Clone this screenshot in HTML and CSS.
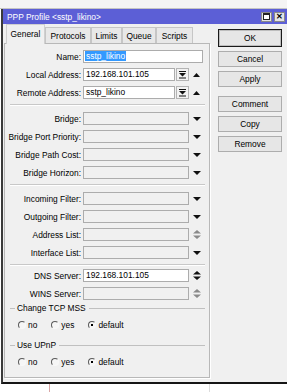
FILE: index.html
```html
<!DOCTYPE html>
<html lang="en">
<head>
  <meta charset="UTF-8">
  <title>PPP Profile</title>
  <link rel="stylesheet" href="styles.css">
</head>
<body>
  <div class="top-strip"></div>
  <div class="window">
    <div class="titlebar">
      <span class="title">PPP Profile &lt;sstp_likino&gt;</span>
      <div class="title-btns">
        <span class="tbtn"><span class="max-box"></span></span>
        <span class="tbtn close">&#x2715;</span>
      </div>
    </div>
    <div class="win-body">
      <div class="tabs-area">
        <div class="tabs">
          <div class="tab active t-general">General</div>
          <div class="tab t-protocols">Protocols</div>
          <div class="tab t-limits">Limits</div>
          <div class="tab t-queue">Queue</div>
          <div class="tab t-scripts">Scripts</div>
        </div>
        <div class="panel">
          <div class="row">
            <label>Name:</label>
            <div class="field white w-full"><span class="sel">sstp_likino</span></div>
          </div>
          <div class="row">
            <label>Local Address:</label>
            <div class="field white w-short">192.168.101.105</div>
            <div class="fbtn"><svg width="7" height="8" viewBox="0 0 7 8"><path d="M0 0h7v1H0zM0 2h7L3.5 5.5zM0 6.5h7v1H0z"/></svg></div>
            <div class="slot"><svg width="7" height="4" viewBox="0 0 7 4"><path d="M0 4h7L3.5 0z"/></svg></div>
          </div>
          <div class="row">
            <label>Remote Address:</label>
            <div class="field white w-short">sstp_likino</div>
            <div class="fbtn"><svg width="7" height="8" viewBox="0 0 7 8"><path d="M0 0h7v1H0zM0 2h7L3.5 5.5zM0 6.5h7v1H0z"/></svg></div>
            <div class="slot"><svg width="7" height="4" viewBox="0 0 7 4"><path d="M0 4h7L3.5 0z"/></svg></div>
          </div>
          <div class="sep"></div>
          <div class="row">
            <label>Bridge:</label>
            <div class="field w-mid"></div>
            <div class="slot"><svg width="8" height="4" viewBox="0 0 8 4"><path d="M0 0h8L4 4z"/></svg></div>
          </div>
          <div class="row">
            <label>Bridge Port Priority:</label>
            <div class="field w-mid"></div>
            <div class="slot"><svg width="8" height="4" viewBox="0 0 8 4"><path d="M0 0h8L4 4z"/></svg></div>
          </div>
          <div class="row">
            <label>Bridge Path Cost:</label>
            <div class="field w-mid"></div>
            <div class="slot"><svg width="8" height="4" viewBox="0 0 8 4"><path d="M0 0h8L4 4z"/></svg></div>
          </div>
          <div class="row">
            <label>Bridge Horizon:</label>
            <div class="field w-mid"></div>
            <div class="slot"><svg width="8" height="4" viewBox="0 0 8 4"><path d="M0 0h8L4 4z"/></svg></div>
          </div>
          <div class="sep"></div>
          <div class="row">
            <label>Incoming Filter:</label>
            <div class="field w-mid"></div>
            <div class="slot"><svg width="8" height="4" viewBox="0 0 8 4"><path d="M0 0h8L4 4z"/></svg></div>
          </div>
          <div class="row">
            <label>Outgoing Filter:</label>
            <div class="field w-mid"></div>
            <div class="slot"><svg width="8" height="4" viewBox="0 0 8 4"><path d="M0 0h8L4 4z"/></svg></div>
          </div>
          <div class="row">
            <label>Address List:</label>
            <div class="field w-mid"></div>
            <div class="slot dim"><svg width="8" height="9" viewBox="0 0 8 9"><path d="M0 3.5h8L4 0zM0 5.5h8L4 9z"/></svg></div>
          </div>
          <div class="row">
            <label>Interface List:</label>
            <div class="field w-mid"></div>
            <div class="slot"><svg width="8" height="4" viewBox="0 0 8 4"><path d="M0 0h8L4 4z"/></svg></div>
          </div>
          <div class="sep tight"></div>
          <div class="row">
            <label>DNS Server:</label>
            <div class="field white w-mid">192.168.101.105</div>
            <div class="slot"><svg width="8" height="9" viewBox="0 0 8 9"><path d="M0 3.5h8L4 0zM0 5.5h8L4 9z"/></svg></div>
          </div>
          <div class="row last">
            <label>WINS Server:</label>
            <div class="field w-mid"></div>
            <div class="slot dim"><svg width="8" height="9" viewBox="0 0 8 9"><path d="M0 3.5h8L4 0zM0 5.5h8L4 9z"/></svg></div>
          </div>

          <div class="group-title"><span>Change TCP MSS</span></div>
          <div class="radios">
            <span class="opt"><span class="radio"></span>no</span>
            <span class="opt"><span class="radio"></span>yes</span>
            <span class="opt"><span class="radio on"></span>default</span>
          </div>

          <div class="group-title"><span>Use UPnP</span></div>
          <div class="radios">
            <span class="opt"><span class="radio"></span>no</span>
            <span class="opt"><span class="radio"></span>yes</span>
            <span class="opt"><span class="radio on"></span>default</span>
          </div>
        </div>
      </div>

      <div class="side-buttons">
        <button class="default">OK</button>
        <button>Cancel</button>
        <button class="gap-after">Apply</button>
        <button>Comment</button>
        <button>Copy</button>
        <button>Remove</button>
      </div>
    </div>
  </div>
  <div class="under"></div>
</body>
</html>
```

FILE: styles.css
```css
body {
  margin: 0;
  width: 287px;
  height: 392px;
  overflow: hidden;
  background: #fff;
  font-family: "Liberation Sans", Arial, sans-serif;
  font-size: 8.4px;
  color: #000;
}
.top-strip {
  height: 8px;
  background: #f4f4f4;
  border-bottom: 1px solid #c4c4c4;
}
.window {
  margin-left: 1px;
  border-left: 2px solid #3a3a3a;
  border-bottom: 2px solid #151515;
  background: #f0f0f0;
}
.titlebar {
  height: 15px;
  background: #5c5fd6;
  display: flex;
  align-items: center;
  justify-content: space-between;
  padding: 0 2px 0 4px;
}
.title {
  color: #fff;
  font-size: 8.4px;
}
.title-btns {
  display: flex;
  gap: 2px;
}
.tbtn {
  width: 9px;
  height: 8px;
  background: #e4e4e4;
  border: 1px solid #8a8a8a;
  display: flex;
  align-items: center;
  justify-content: center;
  font-size: 8px;
  font-weight: bold;
  line-height: 1;
}
.max-box {
  width: 5px;
  height: 4px;
  border: 1px solid #222;
  border-top-width: 2px;
  background: #fff;
}
.win-body {
  display: flex;
  height: 358px;
}
.tabs-area {
  margin-left: 1px;
  width: 206px;
}
.tabs {
  display: flex;
  align-items: flex-end;
  height: 19px;
  padding-left: 2px;
}
.tab {
  display: flex;
  align-items: center;
  justify-content: center;
  background: #e8e8e8;
  border: 1px solid #c6c6c6;
  border-bottom: none;
  box-sizing: border-box;
  height: 16px;
}
.tab.active {
  height: 20px;
  margin-bottom: -1px;
  background: #f0f0f0;
  border-color: #d0d0d0;
  position: relative;
  z-index: 1;
  padding-bottom: 2px;
}
.t-general { width: 39px; }
.t-protocols { width: 46px; }
.t-limits { width: 31px; }
.t-queue { width: 34px; }
.t-scripts { width: 37px; }
.panel {
  height: 335px;
  box-sizing: border-box;
  border: 1px solid #b8b8b8;
  box-shadow: 1px 1px 0 #fff;
  padding-top: 6px;
}
.row {
  display: flex;
  align-items: center;
  height: 13px;
  margin-bottom: 5px;
}
.row.last {
  margin-bottom: 3px;
}
.row label {
  width: 76px;
  margin-right: 2px;
  text-align: right;
  white-space: nowrap;
}
.field {
  height: 13px;
  box-sizing: border-box;
  border: 1px solid #acacac;
  background: #f0f0f0;
  padding-left: 2px;
  line-height: 11px;
  white-space: nowrap;
  overflow: hidden;
}
.field.white {
  background: #fff;
}
.w-full { width: 120px; }
.w-mid { width: 106px; }
.w-short { width: 92px; }
.sel {
  background: #3399ff;
  color: #fff;
  padding: 0 1px;
  margin-left: -1px;
}
.fbtn {
  width: 13px;
  height: 13px;
  margin-left: 1px;
  box-sizing: border-box;
  border: 1px solid #b4b4b4;
  background: #f2f2f2;
  display: flex;
  align-items: center;
  justify-content: center;
}
.slot {
  width: 15px;
  display: flex;
  align-items: center;
  justify-content: center;
}
.slot svg, .fbtn svg {
  fill: #111;
}
.slot.dim svg {
  fill: #8a8a8a;
}
.sep {
  height: 1px;
  border-bottom: 1px solid #fff;
  background: #c8c8c8;
  margin: 0 4px 6px 5px;
}
.sep.tight {
  margin-bottom: 3px;
}
.group-title {
  display: flex;
  align-items: center;
  height: 10px;
  margin: 0 4px 7px 5px;
}
.group-title::before {
  content: "";
  width: 5px;
  height: 1px;
  background: #c0c0c0;
  margin-right: 2px;
}
.group-title::after {
  content: "";
  flex: 1;
  height: 1px;
  background: #c0c0c0;
  margin-left: 3px;
}
.radios {
  display: flex;
  align-items: center;
  height: 10px;
  padding-left: 13px;
  gap: 14px;
  margin-bottom: 10px;
}
.opt {
  display: flex;
  align-items: center;
  gap: 2px;
}
.radio {
  width: 6px;
  height: 6px;
  border-radius: 50%;
  border: 1px solid;
  border-color: #5a5a5a #f8f8f8 #f8f8f8 #5a5a5a;
  background: #f6f6f6;
  position: relative;
}
.radio.on::after {
  content: "";
  position: absolute;
  left: 2px;
  top: 2px;
  width: 2px;
  height: 2px;
  background: #000;
}
.side-buttons {
  margin-left: 8px;
  padding-top: 5px;
  display: flex;
  flex-direction: column;
  width: 64px;
}
.side-buttons button {
  height: 16px;
  margin: 0 0 4px;
  padding: 0;
  font-family: "Liberation Sans", Arial, sans-serif;
  font-size: 8.4px;
  color: #000;
  background: #e6e6e6;
  border: 1px solid #adadad;
}
.side-buttons button.default {
  height: 18px;
  border: 1px solid #1a1a1a;
  box-shadow: inset 0 0 0 1px #bdbdbd;
}
.side-buttons button.gap-after {
  margin-bottom: 9px;
}
.under {
  height: 8px;
  background:
    linear-gradient(#d9a6a6, #d9a6a6) 49px 0 / 1px 100% no-repeat,
    linear-gradient(#dcdcdc, #dcdcdc) 209px 0 / 1px 100% no-repeat,
    #fff;
}
```
